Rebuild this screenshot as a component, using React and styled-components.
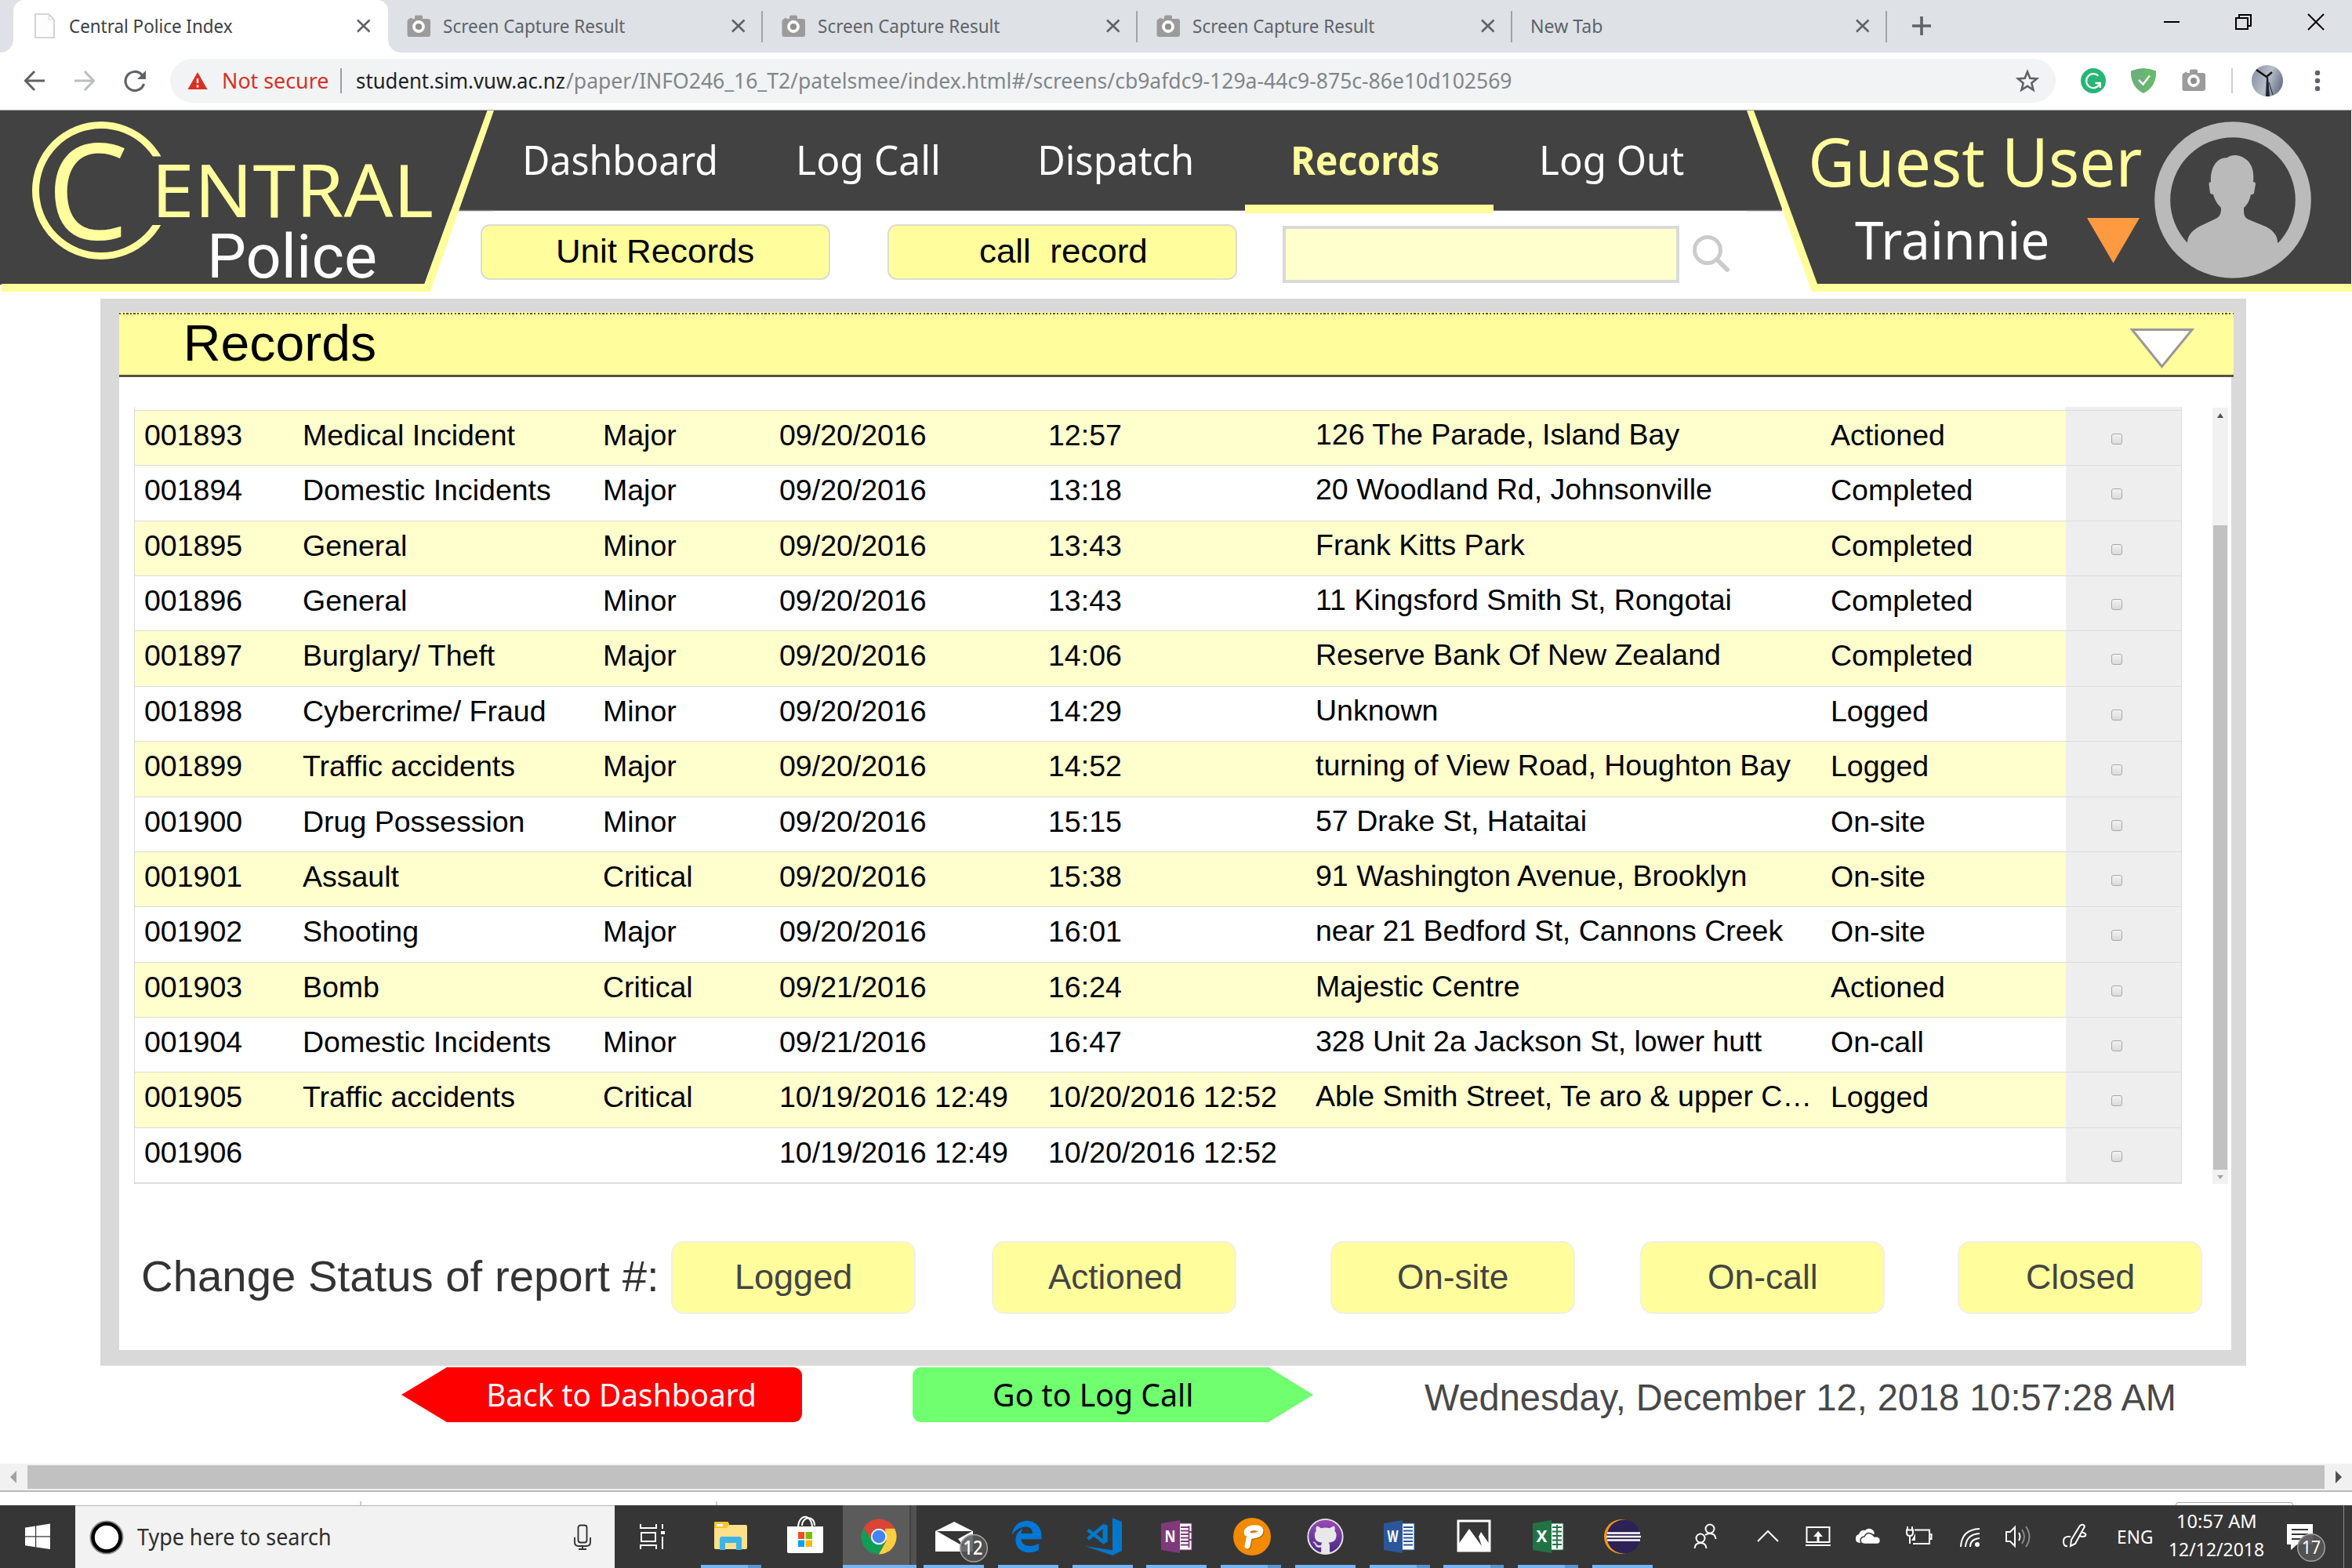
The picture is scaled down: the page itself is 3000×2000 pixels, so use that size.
import React, { useLayoutEffect, useRef, useState } from "react";
import styled, { createGlobalStyle, css } from "styled-components";
import { FaGithub } from "react-icons/fa";
import { FaEdgeLegacy } from "react-icons/fa6";

const ui = `"Noto Sans", "Open Sans", sans-serif`;
const arial = `"Liberation Sans", Arial, sans-serif`;
const c = {
  dark: "#424242",
  yellow: "#fffd9c",
  pale: "#fffecd",
  frame: "#d9d9d9",
  icon: "#5f6368",
};

const GlobalStyle = createGlobalStyle`
  *, *::before, *::after { box-sizing: border-box; }
  html, body { margin: 0; padding: 0; background: #fff; }
  body { width: 3000px; height: 2000px; overflow: hidden; font-family: ${ui}; }
  svg { display: block; flex: none; }
  button, input { font: inherit; margin: 0; padding: 0; border: 0; background: none; }
`;

/* ---------- text fitted to a given ink width ---------- */
const FitBox = styled.span`
  display: block;
  flex: none;
  white-space: pre;
  text-align: left;
`;
const FitInk = styled.span`
  display: inline-block;
  white-space: pre;
  transform-origin: 0 0;
`;
function Fit({ w, children }) {
  const ref = useRef(null);
  const [t, setT] = useState("none");
  useLayoutEffect(() => {
    const s = getComputedStyle(ref.current);
    const ctx = document.createElement("canvas").getContext("2d");
    ctx.font = `${s.fontWeight} ${s.fontSize} ${s.fontFamily}`;
    const m = ctx.measureText(ref.current.textContent);
    const k = w / (m.actualBoundingBoxLeft + m.actualBoundingBoxRight);
    setT(`translateX(${m.actualBoundingBoxLeft * k}px) scaleX(${k})`);
  }, [w]);
  return (
    <FitBox style={{ width: w }}>
      <FitInk ref={ref} style={{ transform: t }}>{children}</FitInk>
    </FitBox>
  );
}

/* ---------- browser chrome ---------- */
const Screen = styled.div`
  width: 3000px;
  height: 2000px;
  display: flex;
  flex-direction: column;
  overflow: hidden;
`;
const TabStrip = styled.div`
  height: 67px;
  flex: none;
  display: flex;
  background: #dee1e6;
  padding-left: 17px;
`;
const Tab = styled.div`
  position: relative;
  width: 478px;
  flex: none;
  display: flex;
  align-items: center;
  padding-bottom: 1px;
  padding-left: ${(p) => (p.$plain ? 25 : 24)}px;
  color: ${(p) => (p.$active ? "#3c4043" : "#5f6368")};
  ${(p) =>
    p.$active
      ? css`
          background: #fff;
          border-radius: 14px 14px 0 0;
          padding-left: 27px;
          &::before, &::after {
            content: "";
            position: absolute;
            bottom: 0;
            width: 16px;
            height: 16px;
          }
          &::before { left: -16px; background: radial-gradient(circle at 0 0, transparent 15.5px, #fff 16px); }
          &::after { right: -16px; background: radial-gradient(circle at 100% 0, transparent 15.5px, #fff 16px); }
        `
      : css`
          &::after {
            content: "";
            position: absolute;
            right: 0;
            top: 14px;
            width: 2px;
            height: 40px;
            background: #a0a3a8;
          }
        `}
`;
const TabTitle = styled.div`
  font-size: 23.6px;
  line-height: 64px;
  flex: 1;
  margin-left: ${(p) => p.$gap}px;
`;
const TabClose = styled.span`
  width: 20px;
  margin-right: 21px;
`;
const StripTools = styled.div`
  flex: 1;
  display: flex;
  padding: 0 35px 0 31px;
`;
const WindowButtons = styled.div`
  margin-left: auto;
  display: flex;
  gap: 70px;
  padding-top: 17px;
`;
const Toolbar = styled.div`
  height: 74px;
  flex: none;
  display: flex;
  align-items: center;
  padding: 1px 0 3px;
  border-bottom: 1px solid #9c9fa0;
  background: #fff;
`;
const NavIcons = styled.div`
  width: 217px;
  display: flex;
  gap: 36px;
  padding-left: 30px;
`;
const Omnibox = styled.div`
  width: 2405px;
  height: 56px;
  border-radius: 28px;
  background: #f1f3f4;
  display: flex;
  align-items: center;
  padding-left: 22px;
  font-size: 27.2px;
  line-height: 53px;
`;
const Warn = styled.div`
  color: #d93025;
  margin: 0 16px 0 20px;
`;
const Host = styled.div`
  color: #202124;
  margin-left: 19px;
`;
const Path = styled.div`
  color: #80868b;
  margin-left: 2px;
`;
const Bar = styled.i`
  width: 2px;
  height: 32px;
  background: ${(p) => p.$color};
`;
const Extensions = styled.div`
  display: flex;
  align-items: center;
  padding-left: 32px;
`;
const Spacer = styled.i`
  width: ${(p) => p.$w}px;
  flex: none;
`;

const Camera = () => (
  <svg width="30" height="29" viewBox="0 0 30 29">
    <path d="M10 5V2.5Q10 .5 12 .5H18Q20 .5 20 2.5V5H27Q30 5 30 8V25Q30 28 27 28H3Q.5 28 .5 25V8Q.5 6 3 5L5 3.5L7 5Z" fill="#9b9b9b" />
    <circle cx="15" cy="15" r="6" fill="#8f8f8f" stroke="#fff" strokeWidth="3.8" />
  </svg>
);
const Page = () => (
  <svg width="26" height="32" viewBox="0 0 26 32">
    <path d="M1 1H18L25 8V31H1Z" fill="#fdfdfd" stroke="#c9c9c9" strokeWidth="1.6" />
    <path d="M18 1V8H25" fill="none" stroke="#ddd" strokeWidth="1.2" />
  </svg>
);
const Cross = () => (
  <svg width="20" height="20" viewBox="0 0 20 20">
    <path d="M2 2.5L17.500 17.500M17.500 2.500L2 17.500" stroke={c.icon} strokeWidth="2.6" />
  </svg>
);

function BrowserTop() {
  return (
    <>
      <TabStrip>
        <Tab $active>
          <Page />
          <TabTitle $gap={19}><Fit w={208}>Central Police Index</Fit></TabTitle>
          <TabClose><Cross /></TabClose>
        </Tab>
        {[0, 1, 2].map((i) => (
          <Tab key={i}>
            <Camera />
            <TabTitle $gap={17}><Fit w={231}>Screen Capture Result</Fit></TabTitle>
            <TabClose><Cross /></TabClose>
          </Tab>
        ))}
        <Tab $plain>
          <TabTitle $gap={0}><Fit w={90}>New Tab</Fit></TabTitle>
          <TabClose><Cross /></TabClose>
        </Tab>
        <StripTools>
          <svg width="26" height="66" viewBox="0 0 26 66">
            <path d="M13 21V45M1 33H25" stroke={c.icon} strokeWidth="3.6" />
          </svg>
          <WindowButtons>
            <svg width="22" height="22" viewBox="0 0 22 22"><path d="M1 11H21" stroke="#000" strokeWidth="2" /></svg>
            <svg width="22" height="22" viewBox="0 0 22 22">
              <path d="M1 6H16V20H1ZM5 6V2H20V16H16" fill="none" stroke="#000" strokeWidth="2" />
            </svg>
            <svg width="22" height="22" viewBox="0 0 22 22"><path d="M1 1L21 21M21 1L1 21" stroke="#000" strokeWidth="2" /></svg>
          </WindowButtons>
        </StripTools>
      </TabStrip>
      <Toolbar>
        <NavIcons>
          <svg width="28" height="28" viewBox="0 0 28 28"><path d="M27 14H3M14 2L2.500 14L14 26" fill="none" stroke={c.icon} strokeWidth="3" /></svg>
          <svg width="28" height="28" viewBox="0 0 28 28"><path d="M1 14H25M14 2L25.500 14L14 26" fill="none" stroke="#bbbdc0" strokeWidth="3" /></svg>
          <svg width="30" height="28" viewBox="0 0 30 28">
            <path d="M25.500 18A12 12 0 1 1 23 6.500L25 8.500" fill="none" stroke={c.icon} strokeWidth="3.2" />
            <path d="M28 1V12H17Z" fill={c.icon} />
          </svg>
        </NavIcons>
        <Omnibox>
          <svg width="26" height="24" viewBox="0 0 26 24">
            <path d="M13 1L25.500 23H.5Z" fill="#d93025" />
            <path d="M13 9V15M13 17.500V20.500" stroke="#fff" strokeWidth="2.400" />
          </svg>
          <Warn><Fit w={133}>Not secure</Fit></Warn>
          <Bar $color="#9a9da1" />
          <Host><Fit w={265}>student.sim.vuw.ac.nz</Fit></Host>
          <Path><Fit w={1206}>/paper/INFO246_16_T2/patelsmee/index.html#/screens/cb9afdc9-129a-44c9-875c-86e10d102569</Fit></Path>
          <Spacer $w={643} />
          <svg width="30" height="30" viewBox="0 0 30 30">
            <path d="M15 3.500L18.300 11.700L27 12.400L20.300 18L22.500 26.600L15 21.900L7.500 26.600L9.700 18L3 12.400L11.700 11.700Z" fill="none" stroke={c.icon} strokeWidth="2.600" />
          </svg>
        </Omnibox>
        <Extensions>
          <svg width="32" height="32" viewBox="0 0 32 32">
            <circle cx="16" cy="16" r="16" fill="#27b674" />
            <path d="M22.500 9.800A9 9 0 1 0 24 20.500M18.500 19H24.800V25" fill="none" stroke="#fff" strokeWidth="2.300" />
          </svg>
          <Spacer $w={32} />
          <svg width="32" height="32" viewBox="0 0 32 32">
            <path d="M16 0Q24 0 32 3.500Q33 23 16 32Z" fill="#67b96b" />
            <path d="M16 0Q8 0 0 3.500Q-1 23 16 32Z" fill="#6bb07a" />
            <path d="M10 15L15.500 20.500L24 9.500" fill="none" stroke="#fff" strokeWidth="2.600" />
          </svg>
          <Spacer $w={33} />
          <Camera />
          <Spacer $w={33} />
          <Bar $color="#cfcfcf" />
          <Spacer $w={24} />
          <svg width="40" height="40" viewBox="0 0 40 40">
            <defs>
              <linearGradient id="sky" x1="0" y1="0.300" x2="1" y2="0.700">
                <stop offset="0" stopColor="#8993a3" /><stop offset=".5" stopColor="#b9bfca" /><stop offset="1" stopColor="#626c83" />
              </linearGradient>
            </defs>
            <circle cx="20" cy="20" r="20" fill="url(#sky)" />
            <path d="M6 6L19 15L26 9" fill="none" stroke="#111" strokeWidth="2.400" />
            <path d="M19 14L18 40H23L21 14Z" fill="#1d2833" />
            <path d="M22 22L27 38" stroke="#223" strokeWidth="1" />
          </svg>
          <Spacer $w={40} />
          <svg width="8" height="28" viewBox="0 0 8 28" fill={c.icon}>
            <circle cx="4" cy="4" r="3.200" /><circle cx="4" cy="14" r="3.200" /><circle cx="4" cy="24" r="3.200" />
          </svg>
        </Extensions>
      </Toolbar>
    </>
  );
}

/* ---------- site header ---------- */
const SiteHeader = styled.header`
  height: 240px;
  flex: none;
  display: flex;
`;
const Middle = styled.div`
  width: 1598px;
  display: flex;
  flex-direction: column;
`;
const Nav = styled.nav`
  height: 128px;
  display: flex;
  background: ${c.dark};
  border-bottom: 1px solid #7d7d7d;
  padding-left: 3px;
`;
const NavItem = styled.a`
  width: ${(p) => p.$w}px;
  height: 131px;
  flex: none;
  display: flex;
  justify-content: center;
  padding-right: ${(p) => p.$shift || 0}px;
  font-size: 50.5px;
  line-height: 125px;
  color: ${(p) => (p.$current ? c.yellow : "#fff")};
  font-weight: ${(p) => (p.$current ? 700 : 400)};
  border-bottom: ${(p) => (p.$current ? `11px solid ${c.yellow}` : "0")};
`;
const Tools = styled.div`
  display: flex;
  padding-top: 17px;
  margin-left: -17px;
`;
const TopButton = styled.button`
  width: 446px;
  height: 71px;
  margin-right: 73px;
  display: flex;
  justify-content: center;
  border: 2px solid #dcdcd4;
  border-radius: 12px;
  background: ${c.yellow};
  font-family: ${arial};
  font-size: 42.5px;
  line-height: 65px;
  color: #000;
`;
const Search = styled.input`
  width: 506px;
  height: 73px;
  margin: 2px 16px 0 -15px;
  border: 4px solid ${c.frame};
  background: ${c.pale};
`;
const SearchIcon = styled.svg`
  margin-top: 12px;
`;
const UserPanel = styled.div`
  width: 772px;
  display: grid;
  & > * { grid-area: 1 / 1; }
`;
const UserBody = styled.div`
  display: flex;
  padding-left: 83px;
`;
const UserText = styled.div`
  width: 437px;
`;
const UserName = styled.div`
  height: 117px;
  font-size: 86px;
  line-height: 127px;
  color: ${c.yellow};
`;
const UserRole = styled.div`
  display: flex;
  padding-left: 55px;
  font-size: 68px;
  line-height: 93px;
  color: #fff;
`;
const RoleArrow = styled.svg`
  margin: 20px 0 0 51px;
`;
const AvatarBox = styled.div`
  padding-top: 14px;
`;

const navItems = [
  ["Dashboard", 242, 316],
  ["Log Call", 177, 317],
  ["Dispatch", 193, 322, 7],
  ["Records", 185, 317, 9],
  ["Log Out", 181, 314, 10],
];

const LogoSvg = styled.svg`
  overflow: visible;
`;
const Logo = () => (
  <LogoSvg width="630" height="240" viewBox="0 141 630 240">
    <defs>
      <clipPath id="ring"><path d="M0 141H260V199.500H180V287H260V381H0Z" /></clipPath>
    </defs>
    <path d="M0 141H630V268.500H0Z" fill={c.dark} />
    <path d="M584 268.500H630" stroke="#7d7d7d" strokeWidth="1.500" />
    <path d="M0 141H622L541 363H0Z" fill={c.dark} />
    <path d="M621.500 141H630L549 372H2V362H541.500Z" fill={c.yellow} />
    <circle cx="129" cy="243" r="83.500" fill="none" stroke={c.yellow} strokeWidth="9" clipPath="url(#ring)" />
    <g fill={c.yellow} fontFamily={ui}>
      <text x="60" y="304.500" fontSize="171" textLength="104" lengthAdjust="spacingAndGlyphs">C</text>
      <text x="193" y="277" fontSize="94" textLength="360" lengthAdjust="spacingAndGlyphs">ENTRAL</text>
    </g>
    <text x="264" y="354" fontSize="77" fontFamily="Roboto, sans-serif" fill="#fff" textLength="217" lengthAdjust="spacingAndGlyphs">Police</text>
  </LogoSvg>
);

const Avatar = () => (
  <svg width="200" height="200" viewBox="0 0 200 200">
    <defs><clipPath id="disc"><circle cx="100" cy="100" r="90" /></clipPath></defs>
    <circle cx="100" cy="100" r="89.800" fill="none" stroke="#bababa" strokeWidth="20" />
    <path
      clipPath="url(#disc)"
      fill="#bababa"
      d="M93 46C98 42 108 42 115 47C126 54 127 66 126 77Q129 77 129 80L127 91Q127 93 123 93Q121 104 114 110C114 118 114 122 120 125L142 134C152 139 157 146 157 154L190 190H10L42 154C42 146 48 139 57 134L76 125C83 122 85 119 85 110Q78 104 75 93Q72 93 71 91L69.500 80Q69.500 77 72 77C71 64 76 46 93 46Z"
    />
  </svg>
);

function Header() {
  return (
    <SiteHeader>
      <Logo />
      <Middle>
        <Nav>
          {navItems.map(([label, ink, w, shift]) => (
            <NavItem key={label} $w={w} $shift={shift} $current={label === "Records"}><Fit w={ink}>{label}</Fit></NavItem>
          ))}
        </Nav>
        <Tools>
          <TopButton><Fit w={249}>Unit Records</Fit></TopButton>
          <TopButton><Fit w={211}>call  record</Fit></TopButton>
          <Search />
          <SearchIcon width="52" height="52" viewBox="0 0 52 52">
            <circle cx="20" cy="21" r="16.500" fill="none" stroke="#cbcbcb" strokeWidth="5" />
            <path d="M32 33L45 46" stroke="#cbcbcb" strokeWidth="6" strokeLinecap="round" />
          </SearchIcon>
        </Tools>
      </Middle>
      <UserPanel>
        <svg width="772" height="240" viewBox="2228 141 772 240">
          <path d="M2228 141H2300L2273 268.500H2228Z" fill={c.dark} />
          <path d="M2228 268.500H2273" stroke="#7d7d7d" strokeWidth="1.500" />
          <path d="M2228 141H2999V363H2310Z" fill={c.dark} />
          <path d="M2228 141H2237L2318 362H3000V372H2311Z" fill={c.yellow} />
        </svg>
        <UserBody>
          <UserText>
            <UserName><Fit w={421}>Guest User</Fit></UserName>
            <UserRole>
              <Fit w={245}>Trainnie</Fit>
              <RoleArrow width="68" height="60" viewBox="0 0 68 60">
                <path d="M0 0H67L33.500 57.500Z" fill="#ff9a40" />
              </RoleArrow>
            </UserRole>
          </UserText>
          <AvatarBox><Avatar /></AvatarBox>
        </UserBody>
      </UserPanel>
    </SiteHeader>
  );
}

/* ---------- records panel ---------- */
const Panel = styled.main`
  width: 2737px;
  height: 1361px;
  flex: none;
  margin-left: 128px;
  border: solid ${c.frame};
  border-width: 17px 19px 20px 24px;
  background: #fff;
`;
const TitleBar = styled.div`
  width: 2697px;
  height: 83px;
  display: flex;
  justify-content: space-between;
  padding: 0 49px 0 87px;
  background: repeating-linear-gradient(90deg, #55553f 0 2.300px, ${c.yellow} 2.300px 4.600px) 0 1px / 100% 2px no-repeat ${c.yellow};
  border-bottom: 3px solid #55553f;
  font-family: ${arial};
  font-size: 64px;
  line-height: 81px;
  color: #000;
`;
const TableArea = styled.div`
  display: flex;
  padding: 38px 0 0 19px;
`;
const Table = styled.div`
  width: 2612px;
  height: 991px;
  border: solid #dcdcdc;
  border-width: 0 1.500px 2px 1px;
`;
const gridCols = "202px 383px 225px 343px 341px 657px 308px 1fr";
const Stub = styled.div`
  height: 4px;
  display: grid;
  grid-template-columns: 1fr 148px;
  & > :last-child { background: #eee; }
`;
const Row = styled.div`
  display: grid;
  grid-template-columns: ${gridCols};
  height: 70.360px;
  padding-left: 12px;
  border-top: 1.500px solid #dcdcdc;
  background: ${(p) => (p.$odd ? c.pale : "#fff")};
  font-family: ${arial};
  font-size: 37.500px;
  color: #000;
`;
const Cell = styled.div`
  white-space: nowrap;
  padding-bottom: 2px;
  line-height: ${(p) => (p.$raised ? 60 : 62)}px;
  overflow: ${(p) => (p.$raised ? "hidden" : "visible")};
  text-overflow: ellipsis;
`;
const PickCell = styled.div`
  margin-left: -8px;
  background: #eee;
  padding: 29px 0 0 58px;
`;
const Check = styled.div`
  width: 14px;
  height: 14px;
  border: 1.500px solid #a8a8a8;
  border-radius: 3px;
  background: linear-gradient(#f2f2f2, #dadada);
`;
const ScrollV = styled.div`
  width: 20px;
  height: 990px;
  margin: 1px 0 0 39px;
  display: flex;
  flex-direction: column;
  align-items: center;
  background: #f1f1f1;
`;
const ThumbV = styled.div`
  width: 18px;
  height: 822px;
  margin: 131px 0 6px;
  background: #c1c1c1;
`;
const StatusRow = styled.div`
  display: flex;
  padding: 73px 0 0 30px;
  font-family: ${arial};
`;
const StatusLabel = styled.div`
  width: 674px;
  font-size: 56.250px;
  line-height: 90px;
  color: #333;
`;
const StatusButton = styled.button`
  width: 312px;
  height: 93px;
  margin-right: ${(p) => p.$gap}px;
  display: flex;
  justify-content: center;
  border: 2px solid #f0f0ea;
  border-radius: 16px;
  background: ${c.yellow};
  font-size: 43.500px;
  line-height: 88px;
  color: #444;
`;

const D = "09/20/2016";
const LD = "10/19/2016 12:49";
const LT = "10/20/2016 12:52";
const rows = [
  ["001893", "Medical Incident", "Major", D, "12:57", "126 The Parade, Island Bay", "Actioned"],
  ["001894", "Domestic Incidents", "Major", D, "13:18", "20 Woodland Rd, Johnsonville", "Completed"],
  ["001895", "General", "Minor", D, "13:43", "Frank Kitts Park", "Completed"],
  ["001896", "General", "Minor", D, "13:43", "11 Kingsford Smith St, Rongotai", "Completed"],
  ["001897", "Burglary/ Theft", "Major", D, "14:06", "Reserve Bank Of New Zealand", "Completed"],
  ["001898", "Cybercrime/ Fraud", "Minor", D, "14:29", "Unknown", "Logged"],
  ["001899", "Traffic accidents", "Major", D, "14:52", "turning of View Road, Houghton Bay", "Logged"],
  ["001900", "Drug Possession", "Minor", D, "15:15", "57 Drake St, Hataitai", "On-site"],
  ["001901", "Assault", "Critical", D, "15:38", "91 Washington Avenue, Brooklyn", "On-site"],
  ["001902", "Shooting", "Major", D, "16:01", "near 21 Bedford St, Cannons Creek", "On-site"],
  ["001903", "Bomb", "Critical", "09/21/2016", "16:24", "Majestic Centre", "Actioned"],
  ["001904", "Domestic Incidents", "Minor", "09/21/2016", "16:47", "328 Unit 2a Jackson St, lower hutt", "On-call"],
  ["001905", "Traffic accidents", "Critical", LD, LT, "Able Smith Street, Te aro & upper C…", "Logged"],
  ["001906", "", "", LD, LT, "", ""],
];
const statuses = [
  ["Logged", 145, 97],
  ["Actioned", 169, 120],
  ["On-site", 139, 83],
  ["On-call", 136, 93],
  ["Closed", 135, 0],
];

function Records() {
  return (
    <Panel>
      <TitleBar>
        <Fit w={239}>Records</Fit>
        <svg width="84" height="76" viewBox="0 0 84 76">
          <path d="M3.500 22.500H80L41.500 69.500Z" fill="#fff" stroke="#999" strokeWidth="3" />
        </svg>
      </TitleBar>
      <TableArea>
        <Table>
          <Stub><i /><i /></Stub>
          {rows.map((r, i) => (
            <Row key={r[0]} $odd={i % 2 === 0}>
              {r.map((v, j) => <Cell key={j} $raised={j === 5}>{v}</Cell>)}
              <PickCell><Check /></PickCell>
            </Row>
          ))}
        </Table>
        <ScrollV>
          <svg width="10" height="19" viewBox="0 0 10 19"><path d="M1 13L5 7L9 13Z" fill="#505050" /></svg>
          <ThumbV />
          <svg width="10" height="8" viewBox="0 0 10 8"><path d="M1 1L5 6L9 1Z" fill="#a3a3a3" /></svg>
        </ScrollV>
      </TableArea>
      <StatusRow>
        <StatusLabel><Fit w={654}>Change Status of report #:</Fit></StatusLabel>
        {statuses.map(([label, ink, gap]) => (
          <StatusButton key={label} $gap={gap}><Fit w={ink}>{label}</Fit></StatusButton>
        ))}
      </StatusRow>
    </Panel>
  );
}

/* ---------- page footer and scrollbar ---------- */
const Footer = styled.footer`
  height: 125px;
  flex: none;
  display: flex;
  padding: 2px 0 0 512px;
`;
const Arrow = styled.button`
  width: 511px;
  height: 70px;
  display: flex;
  font-size: 40.500px;
  line-height: 69px;
  ${(p) =>
    p.$back
      ? css`
          background: #f00;
          color: #fff;
          padding-left: 111px;
          margin-right: 141px;
          border-radius: 0 11px 11px 0;
          clip-path: polygon(0 50%, 58px 0, 100% 0, 100% 100%, 58px 100%);
        `
      : css`
          background: #6fff6f;
          color: #000;
          padding-left: 104px;
          margin-right: 142px;
          border-radius: 11px 0 0 11px;
          clip-path: polygon(0 0, 454px 0, 100% 50%, 454px 100%, 0 100%);
        `}
`;
const Clock = styled.div`
  font-family: ${arial};
  font-size: 47.500px;
  line-height: 78px;
  color: #484848;
`;
const ScrollH = styled.div`
  height: 36px;
  flex: none;
  display: flex;
  align-items: center;
  justify-content: space-between;
  padding: 0 12px 0 12px;
  background: #f1f1f1;
  border-bottom: 2px solid #b9b9b9;
`;
const ThumbH = styled.div`
  width: 2930px;
  height: 30px;
  background: #c1c1c1;
`;
const Sliver = styled.div`
  height: 17px;
  flex: none;
  display: flex;
  align-items: flex-end;
  padding-left: 459px;
  background: #fff;
`;
const Tick = styled.i`
  width: 2px;
  height: 5px;
  margin-right: ${(p) => p.$gap}px;
  background: #ccc;
`;
const Lip = styled.i`
  width: 150px;
  height: 4px;
  border: 1.500px solid #aaa;
  border-bottom: 0;
  border-radius: 5px 5px 0 0;
`;

/* ---------- taskbar ---------- */
const Taskbar = styled.div`
  height: 80px;
  flex: none;
  display: flex;
  background: #363636;
  color: #fff;
`;
const Start = styled.div`
  width: 96px;
  padding: 23px 0 0 32px;
`;
const SearchBox = styled.div`
  width: 688px;
  display: flex;
  align-items: center;
  padding-left: 18px;
  background: #f2f2f2;
  border-top: 1px solid #b5b5b5;
  color: #2e2e2e;
  font-size: 28.500px;
  line-height: 79px;
`;
const SearchText = styled.div`
  width: 556px;
  margin-left: 17px;
`;
const TaskView = styled.div`
  width: 101px;
  padding: 24px 0 0 31px;
`;
const AppCell = styled.div`
  width: 94.750px;
  flex: none;
  display: flex;
  flex-direction: column;
  align-items: center;
  background: ${(p) => (p.$active ? "linear-gradient(90deg, #5b5b5b 85px, #414141 85px 87px, #515151 87px)" : "none")};
`;
const Glyph = styled.div`
  height: 76px;
  display: flex;
  align-items: center;
`;
const Line = styled.i`
  width: ${(p) => (p.$full ? "100%" : "77px")};
  height: 4px;
  background: ${(p) => (p.$multi ? "linear-gradient(90deg, #76b4f8 60px, #5a93d0 60px)" : "#76b4f8")};
`;
const Tray = styled.div`
  display: flex;
  align-items: center;
  padding-left: 18px;
`;
const TrayCell = styled.div`
  width: ${(p) => p.$w}px;
  display: flex;
  justify-content: center;
`;
const Small = styled.div`
  font-size: ${(p) => p.$fs}px;
  line-height: 36px;
`;
const Time = styled.div`
  width: 120px;
  margin: -2px 28px 0 23px;
  display: flex;
  flex-direction: column;
  align-items: center;
`;
const TrayEdge = styled.i`
  width: 1px;
  height: 80px;
  background: #8a8a8a;
`;

const S = ({ children, ...p }) => (
  <svg width="64" height="76" viewBox="0 0 64 76" fill="none" {...p}>{children}</svg>
);
const Office = ({ color, letter, lines }) => (
  <S>
    <path d="M32 23H51V57H32Z" fill="#fff" stroke={color} strokeWidth="1" />
    {lines}
    <path d="M12 23L36 19V61L12 57Z" fill={color} />
    <text x="16.500" y="47" fontSize="21.500" fontWeight="700" fontFamily={ui} fill="#fff" textLength="14" lengthAdjust="spacingAndGlyphs">{letter}</text>
  </S>
);
const apps = [
  { id: "explorer", multi: true, icon: (
    <S>
      <path d="M11 23Q11 21 13 21H27Q29 21 30 25H51Q53 25 53 27V54Q53 56 51 56H13Q11 56 11 54Z" fill="#ffe08a" />
      <path d="M11 29V23Q11 21 13 21H27Q30 21 30 25L27 29Z" fill="#f9c22e" />
      <path d="M14 24H22V27H14Z" fill="#fff" />
      <path d="M18 57V43Q18 40 21 40H43Q46 40 46 43V57H39V48H25V57Z" fill="#3db4e8" />
    </S>) },
  { id: "store", none: true, icon: (
    <S>
      <path d="M23 29C23 10 41 10 41 29M28 26C28 14 44 12 44 26" stroke="#fff" strokeWidth="2" />
      <path d="M9 27H55V59Q55 61 53 61H11Q9 61 9 59Z" fill="#fff" />
      <path d="M23 34H31V43H23Z" fill="#f25022" /><path d="M32.500 34H41V43H32.500Z" fill="#7fba00" />
      <path d="M23 44.500H31V53H23Z" fill="#00a4ef" /><path d="M32.500 44.500H41V53H32.500Z" fill="#ffb900" />
    </S>) },
  { id: "chrome", active: true, icon: (
    <S>
      <g transform="translate(31 40)">
        <circle r="22.500" fill="#db4437" />
        <path d="M-19.500 -11.200A22.500 22.500 0 0 0 0 22.500L9.500 5.500L0 -2Z" fill="#0f9d58" />
        <path d="M19.900 -10.500A22.500 22.500 0 0 1 0 22.500L9.500 5.500L8 -10.500Z" fill="#ffcd40" />
        <path d="M-19.500 -11.200A22.500 22.500 0 0 1 19.900 -10.500H0L-9 5Z" fill="#db4437" />
        <circle r="10.300" fill="#f1f1f1" /><circle r="8.300" fill="#4285f4" />
      </g>
    </S>) },
  { id: "mail", icon: (
    <svg width="94" height="76" viewBox="-15 0 94 76" fill="none">
      <path d="M8 33L32 21L56 33V59H8Z" fill="#fff" />
      <path d="M10 33H55L37 43L45 53Z" fill="#363636" />
      <circle cx="57" cy="54.700" r="17.300" fill="#555" fillOpacity=".85" stroke="#a5a5a5" strokeWidth="1.500" />
      <text x="56" y="63" textAnchor="middle" fontSize="24.500" fontFamily={ui} fontWeight="500" fill="#fff" textLength="25" lengthAdjust="spacingAndGlyphs">12</text>
    </svg>) },
  { id: "edge", icon: (
    <S><g transform="translate(9.500 19)"><FaEdgeLegacy size={42} color="#0078d7" /></g></S>) },
  { id: "vscode", icon: (
    <S>
      <path d="M45 16L57 21V58L45 64L10 52L45 57.500Z" fill="#0079cc" />
      <path d="M13.500 31.500L34 47M13.500 43L34 26" stroke="#0079cc" strokeWidth="4.500" />
      <path d="M32.500 23.500L38.700 25.500V46.500L32.500 50Z" fill="#0079cc" />
    </S>) },
  { id: "onenote", icon: <Office color="#80397b" letter="N" lines={<path d="M37 28H47M37 32.500H47M37 37H47M37 41.500H47M37 46H47M37 50.500H47M47.500 26V54M51 34H47M51 44H47" stroke="#80397b" strokeWidth="1.800" />} /> },
  { id: "pandora", multi: true, icon: (
    <S>
      <circle cx="33" cy="40" r="24" fill="#f38b00" />
      <g strokeLinecap="round" strokeLinejoin="round" strokeWidth="7">
        <path d="M28 53L31 39M27.500 37Q26 32 34 30Q44 29 45 33Q45 39 35 40" stroke="#a85f00" />
        <path d="M27 52L30 38M26.500 36Q25 31 33 29Q43 28 44 32Q44 38 34 39" stroke="#fff" />
      </g>
    </S>) },
  { id: "github", icon: (
    <S>
      <defs>
        <linearGradient id="cat" x1="0" y1="0" x2="0" y2="1">
          <stop offset="0" stopColor="#9b4bb5" /><stop offset="1" stopColor="#4a2a86" />
        </linearGradient>
      </defs>
      <g transform="translate(32.500 40)">
        <circle r="22.500" fill="#e8e8e8" />
        <g transform="translate(-22.200 -22.800)"><FaGithub size={44.500} fill="url(#cat)" /></g>
        <circle r="22.200" stroke="#e4e4e4" strokeWidth="1.800" />
      </g>
    </S>) },
  { id: "word", multi: true, icon: <Office color="#2b579a" letter="W" lines={<path d="M37 28H49M37 32.500H49M37 37H49M37 41.500H49M37 46H49M37 50.500H49" stroke="#2b579a" strokeWidth="1.800" />} /> },
  { id: "photos", multi: true, icon: (
    <S>
      <path d="M12 20H52V58H12Z" stroke="#fff" strokeWidth="3" />
      <path d="M12 50L26 30L42 52L38 40L41 34L52 50V59H12Z" fill="#fff" />
    </S>) },
  { id: "excel", multi: true, icon: <Office color="#217346" letter="X" lines={<path d="M37 28H49M37 33.500H49M37 39H49M37 44.500H49M37 50H49M43 25V55" stroke="#217346" strokeWidth="1.800" />} /> },
  { id: "eclipse", icon: (
    <S>
      <circle cx="31" cy="40" r="22" fill="#f7941e" />
      <circle cx="34" cy="40" r="21.500" fill="#2c2255" />
      <path d="M13 35.500H55M12 40H56M13 44.500H55" stroke="#fff" strokeWidth="2.400" />
    </S>) },
];

const T = ({ children, w = 36 }) => (
  <svg width={w} height="36" viewBox={`0 0 ${w} 36`} fill="none" stroke="#fff" strokeWidth="2">{children}</svg>
);

function WindowsTaskbar() {
  return (
    <Taskbar>
      <Start>
        <svg width="32" height="34" viewBox="0 0 32 34" fill="#fff">
          <path d="M0 5.500L13 3.400V16.200H0ZM14.200 3.200L32 .5V16.200H14.200ZM0 17.400H13V30.300L0 28.200ZM14.200 17.400H32V33L14.200 30.500Z" />
        </svg>
      </Start>
      <SearchBox>
        <svg width="44" height="44" viewBox="0 0 44 44">
          <circle cx="22" cy="22" r="18.500" fill="#fff" stroke="#8a8a8a" strokeWidth="6" />
          <circle cx="22" cy="22" r="17.500" fill="none" stroke="#000" strokeWidth="4.500" />
        </svg>
        <SearchText><Fit w={246}>Type here to search</Fit></SearchText>
        <svg width="24" height="34" viewBox="0 0 24 34" fill="none" stroke="#333" strokeWidth="1.900">
          <rect x="6.500" y="1.500" width="11" height="22" rx="3" />
          <path d="M2 17V23Q2 28 7 28H17Q22 28 22 23V17M12 28V32M7 32H17" />
        </svg>
      </SearchBox>
      <TaskView>
        <svg width="34" height="32" viewBox="0 0 34 32" fill="none" stroke="#fff" strokeWidth="2">
          <path d="M2 0V5H22V0M3 11H21V22H3ZM2 32V27H22V32M30 0V6M30 16V32" />
          <path d="M28 9H33V13H28Z" fill="#fff" stroke="none" />
        </svg>
      </TaskView>
      {apps.map((a) => (
        <AppCell key={a.id} $active={a.active}>
          <Glyph>{a.icon}</Glyph>
          {!a.none && <Line $full={a.active} $multi={a.multi} />}
        </AppCell>
      ))}
      <Tray>
        <TrayCell $w={80}>
          <T>
            <circle cx="24" cy="8" r="5.500" /><circle cx="12" cy="20" r="5.500" />
            <path d="M4.500 33Q5 26 12 26Q19 26 19.500 33M18 16Q20 14 24 14Q31 14 31.500 21" />
          </T>
        </TrayCell>
        <Spacer $w={8} />
        <TrayCell $w={64}><T><path d="M5 24L18 11L31 24" /></T></TrayCell>
        <TrayCell $w={64}>
          <T><path d="M3.500 6H32.500V25H3.500ZM2 29H34" /><path d="M18 24V14" strokeWidth="3" /><path d="M12 18L18 11L24 18Z" fill="#fff" stroke="none" /></T>
        </TrayCell>
        <TrayCell $w={64}>
          <T>
            <path d="M7 26Q1 25 2 20Q2 16 6 15Q8 9 14 10Q18 6 23 9Q26 11 26 14L14 24Z" fill="#fff" stroke="none" />
            <path d="M13 27.500Q8 27 8 22.500Q9 18 13 18Q16 12 21 14Q24 15 26 18Q33 17 33.500 23Q33 27.500 29 27.500Z" fill="#fff" stroke="#363636" strokeWidth="1.500" />
          </T>
        </TrayCell>
        <TrayCell $w={64}>
          <T><path d="M13 9.500H32V27H11M32 15H34.500V21H32M4 5V9M10 5V9M3 9.500H11V13Q11 17 7 17Q3 17 3 13ZM7 17V27" /><path d="M12 18L14 14V23H9Z" fill="#fff" stroke="none" /></T>
        </TrayCell>
        <TrayCell $w={64}>
          <T>
            <circle cx="29" cy="28" r="3" fill="#fff" stroke="none" />
            <path d="M8 31Q9 9 32 8M14 31Q15 15 32 14M20 31Q20 21 32 20" />
          </T>
        </TrayCell>
        <TrayCell $w={64}>
          <T>
            <path d="M2 12H7L13 6V30L7 24H2Z" />
            <path d="M18 13Q21 18 18 23" /><path d="M22 9Q28 18 22 27M27 5Q36 18 27 31" stroke="#8a8a8a" />
          </T>
        </TrayCell>
        <TrayCell $w={80}>
          <T><path d="M13 22L24 4Q28 1 30 5L18 27L12 30ZM12 18Q3 17 3 24Q3 31 8 30M26 12Q33 14 31 17Q27 19 24 17" /></T>
        </TrayCell>
        <Spacer $w={15} />
        <Small $fs={24}><Fit w={43}>ENG</Fit></Small>
        <Time>
          <Small $fs={22.800}><Fit w={99}>10:57 AM</Fit></Small>
          <Small $fs={22.800}><Fit w={119}>12/12/2018</Fit></Small>
        </Time>
        <svg width="52" height="80" viewBox="0 0 52 80">
          <path d="M1 24H34V50H14L6 57V50H1Z" fill="#fff" />
          <path d="M7 31H28M7 37H28M7 43H20" stroke="#363636" strokeWidth="2" />
          <circle cx="32" cy="54" r="17.300" fill="#555" fillOpacity=".92" stroke="#a0a0a0" strokeWidth="1.500" />
          <text x="32" y="62" textAnchor="middle" fontSize="24" fontFamily={ui} fill="#fff" textLength="24" lengthAdjust="spacingAndGlyphs">17</text>
        </svg>
        <Spacer $w={21} />
        <TrayEdge />
      </Tray>
    </Taskbar>
  );
}

export default function App() {
  return (
    <Screen>
      <GlobalStyle />
      <BrowserTop />
      <Header />
      <Records />
      <Footer>
        <Arrow $back><Fit w={339}>Back to Dashboard</Fit></Arrow>
        <Arrow><Fit w={251}>Go to Log Call</Fit></Arrow>
        <Clock><Fit w={958}>Wednesday, December 12, 2018 10:57:28 AM</Fit></Clock>
      </Footer>
      <ScrollH>
        <svg width="10" height="18" viewBox="0 0 10 18"><path d="M9 1V17L1 9Z" fill="#a3a3a3" /></svg>
        <ThumbH />
        <svg width="10" height="18" viewBox="0 0 10 18"><path d="M1 1V17L9 9Z" fill="#505050" /></svg>
      </ScrollH>
      <Sliver><Tick $gap={452} /><Tick $gap={1860} /><Lip /></Sliver>
      <WindowsTaskbar />
    </Screen>
  );
}
